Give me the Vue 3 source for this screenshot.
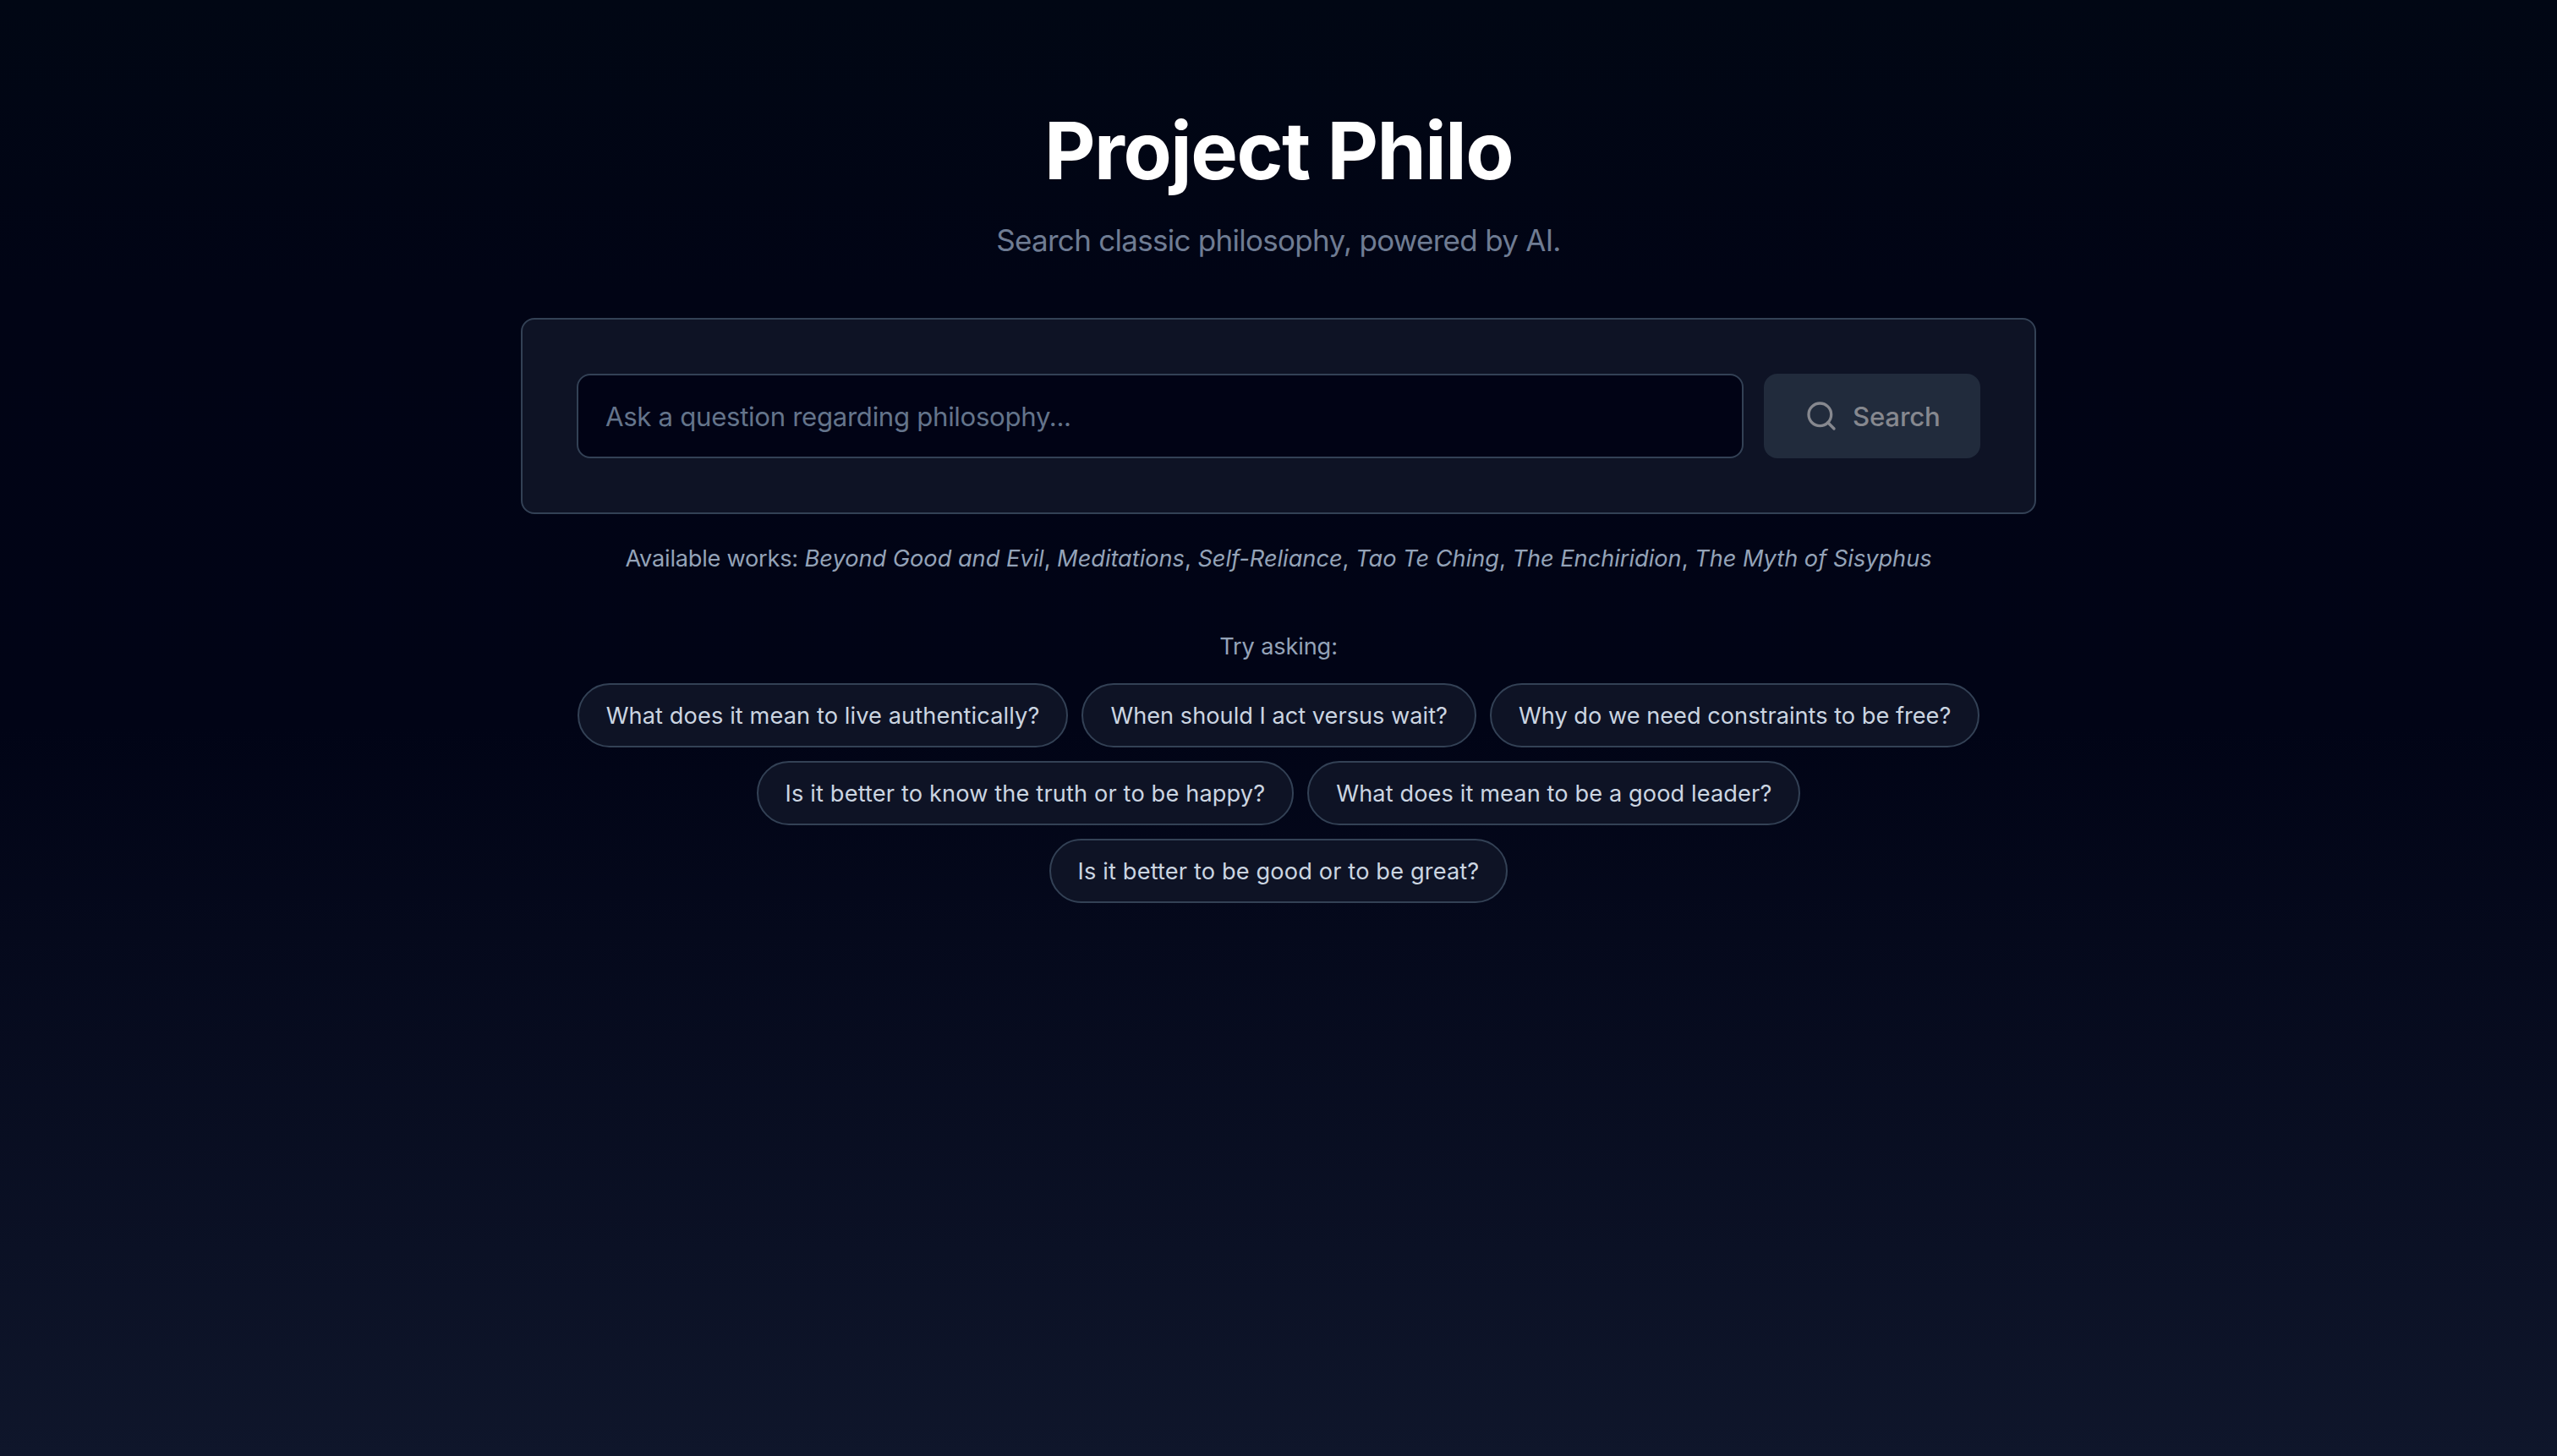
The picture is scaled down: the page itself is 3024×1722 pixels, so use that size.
<template>
  <main class="page">
    <header class="hero">
      <h1 class="title">Project Philo</h1>
      <p class="subtitle">Search classic philosophy, powered by AI.</p>
    </header>

    <form class="search-card" @submit.prevent>
      <input
        v-model="query"
        class="search-input"
        type="text"
        placeholder="Ask a question regarding philosophy..."
      />
      <button class="search-button" type="submit" :disabled="!query.trim()">
        <svg class="search-icon" viewBox="0 0 24 24" fill="none" stroke="currentColor" stroke-width="2" stroke-linecap="round" stroke-linejoin="round">
          <circle cx="11" cy="11" r="8" />
          <path d="m21 21-4.35-4.35" />
        </svg>
        <span class="search-label">Search</span>
      </button>
    </form>

    <p class="works">
      <span class="works-label">Available works:</span>{{ ' ' }}
      <template v-for="(work, i) in works" :key="work"><em>{{ work }}</em><template v-if="i < works.length - 1">, </template></template>
    </p>

    <section class="suggestions">
      <p class="suggestions-label">Try asking:</p>
      <div class="pills">
        <button
          v-for="question in questions"
          :key="question"
          class="pill"
          type="button"
          @click="query = question"
        >{{ question }}</button>
      </div>
    </section>
  </main>
</template>

<script setup>
import { ref } from 'vue'

const query = ref('')

const works = [
  'Beyond Good and Evil',
  'Meditations',
  'Self-Reliance',
  'Tao Te Ching',
  'The Enchiridion',
  'The Myth of Sisyphus'
]

const questions = [
  'What does it mean to live authentically?',
  'When should I act versus wait?',
  'Why do we need constraints to be free?',
  'Is it better to know the truth or to be happy?',
  'What does it mean to be a good leader?',
  'Is it better to be good or to be great?'
]
</script>

<style>
body {
  background: #020617;
}
</style>

<style scoped>
.page {
  box-sizing: border-box;
  min-height: 100vh;
  padding: 130px 64px 64px;
  display: flex;
  flex-direction: column;
  align-items: center;
  background: linear-gradient(to bottom, #010714 0%, #010415 20%, #010416 50%, #0f162b 100%);
  font-family: Inter, 'Noto Sans', sans-serif;
  color: #fff;
}

.hero {
  text-align: center;
}

.title {
  margin: 0 0 30px;
  font-size: 93.5px;
  line-height: 96px;
  font-weight: 700;
  letter-spacing: -1.45px;
}

.subtitle {
  margin: 0;
  font-size: 35px;
  line-height: 56px;
  letter-spacing: -0.72px;
  color: #6f7c93;
}

/* search box */
.search-card {
  box-sizing: border-box;
  width: 1792px;
  margin-top: 64px;
  padding: 64px;
  display: flex;
  gap: 24px;
  background: #0e1325;
  border: 2px solid #334155;
  border-radius: 16px;
}

.search-input {
  box-sizing: border-box;
  flex: 1;
  min-width: 0;
  height: 100px;
  padding: 2px 32px 0;
  background: #010315;
  border: 2px solid #334155;
  border-radius: 16px;
  outline: none;
  font-family: inherit;
  font-size: 31.2px;
  letter-spacing: -0.32px;
  color: #fff;
}

.search-input::placeholder {
  color: #64748b;
  opacity: 1;
}

.search-button {
  box-sizing: border-box;
  width: 256px;
  height: 100px;
  padding: 0 48px;
  display: flex;
  align-items: center;
  gap: 17px;
  border: 0;
  border-radius: 16px;
  background: #212b3c;
  font-family: inherit;
  font-size: 31.2px;
  font-weight: 500;
  letter-spacing: -0.2px;
  color: #86888f;
  white-space: nowrap;
}

.search-icon {
  width: 40px;
  height: 40px;
  flex-shrink: 0;
}

.search-label {
  padding-top: 1px;
}

.works {
  margin: 33px 0 0;
  font-size: 27.2px;
  line-height: 40px;
  letter-spacing: -0.02px;
  color: #94a3b8;
}

.works-label {
  letter-spacing: -0.24px;
}

/* suggested questions */
.suggestions {
  width: 1700px;
  margin-top: 64px;
}

.suggestions-label {
  margin: 0 0 23px;
  font-size: 27.2px;
  line-height: 40px;
  letter-spacing: -0.15px;
  text-align: center;
  color: #94a3b8;
}

.pills {
  display: flex;
  flex-wrap: wrap;
  justify-content: center;
  gap: 16px;
}

.pill {
  padding: 17px 32px 15px;
  background: #0e1325;
  border: 2px solid #334155;
  border-radius: 38px;
  font-family: inherit;
  font-size: 27.2px;
  line-height: 40px;
  letter-spacing: 0.1px;
  color: #cbd5e1;
  white-space: nowrap;
}

.pill:nth-child(2),
.pill:nth-child(3) {
  letter-spacing: 0;
}

.pill:nth-child(4),
.pill:nth-child(6) {
  letter-spacing: 0.14px;
}
</style>
